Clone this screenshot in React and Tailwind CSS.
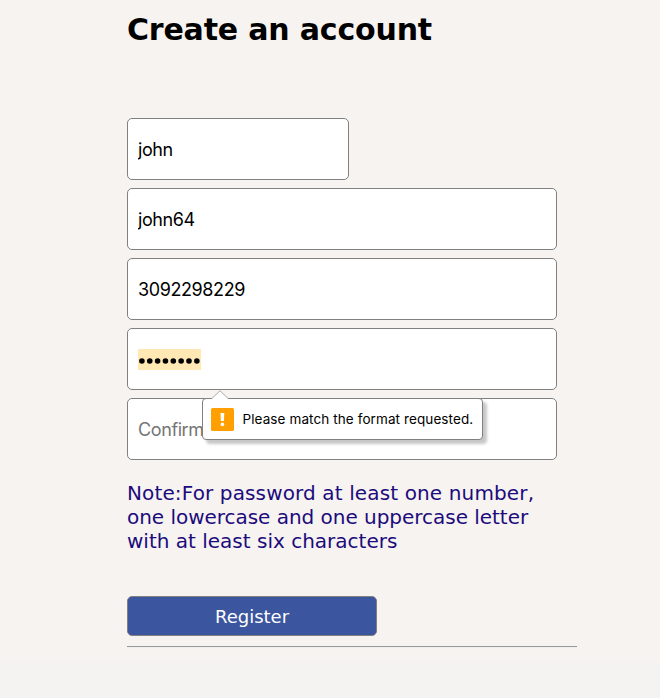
const fieldBase =
  "h-[62px] rounded-[5px] border border-[#808080] bg-white px-[10px] text-[18px] tracking-[-0.4px] font-['Inter','Liberation_Sans',sans-serif] outline-none";

function ValidationBubble() {
  return (
    <div role="alert" className="absolute left-[75px] top-0 flex h-[42px] w-[281px] items-center rounded-[4px] border border-[#808080] bg-white pl-2 shadow-[4px_4px_3px_rgba(0,0,0,0.22)]">
      <svg className="absolute left-[8px] top-[-9px]" width="18" height="11" viewBox="0 0 18 11">
        <path d="M0.5 9 L9 0.8 L17.5 9 V11 H0.5 Z" fill="#fff" />
        <path d="M0.5 8.8 L9 0.8 L17.5 8.8" fill="none" stroke="#aaa" />
      </svg>
      <svg width="23" height="23" viewBox="0 0 23 23" className="shrink-0">
        <rect width="23" height="23" rx="1.5" fill="#ffa000" />
        <path d="M9.5 5 H13.3 L12.9 13 H9.9 Z" fill="#fff" />
        <circle cx="11.4" cy="16.4" r="1.8" fill="#fff" />
      </svg>
      <span className="ml-[8.5px] whitespace-nowrap font-['Inter','Liberation_Sans',sans-serif] text-[13.5px] tracking-[0.1px] text-black">
        Please match the format requested.
      </span>
    </div>
  );
}

export default function App() {
  return (
    <div className="flex h-[698px] w-[660px] flex-col overflow-hidden bg-[#f4f3f1] font-['DejaVu_Sans',sans-serif]">
      <main className="h-[662px] bg-[#f7f3f0] pl-[127px]">
        <h1 className="h-[118px] whitespace-nowrap pt-[10px] text-[30px] font-bold leading-[40px] tracking-[-0.18px] text-black">
          Create an account
        </h1>
        <form className="flex flex-col items-start gap-2">
          <input readOnly value="john" className={fieldBase + " w-[222px]"} />
          <input readOnly value="john64" className={fieldBase + " w-[430px]"} />
          <input readOnly value="3092298229" className={fieldBase + " w-[430px]"} />
          <div className={fieldBase + " flex w-[430px] items-center"}>
            <svg width="63" height="21" viewBox="0 0 63 21" className="bg-[#ffe8b3]">
              {Array.from({ length: 8 }, (_, i) => (
                <circle key={i} cx={3.9 + i * 7.85} cy="12" r="2.8" fill="#000" />
              ))}
            </svg>
          </div>
          <div className="relative flex">
            <input readOnly placeholder="Confirm Password" className={fieldBase + " w-[430px] placeholder:text-[#757575]"} />
            <ValidationBubble />
          </div>
        </form>
        <p className="mt-[21px] whitespace-nowrap text-[20px] leading-6 text-[#1c0b7c]">
          <span className="block tracking-[0.13px]">Note:For password at least one number,</span>
          <span className="block tracking-[-0.03px]">one lowercase and one uppercase letter</span>
          <span className="block">with at least six characters</span>
        </p>
        <button className="mt-[43px] block h-10 w-[250px] rounded-[5px] border border-[#808080] bg-[#3b559f] text-[18px] text-white">
          Register
        </button>
        <hr className="mt-[10px] h-[2px] w-[450px] border-0 border-t border-[#999999] bg-[#f1efed]" />
      </main>
    </div>
  );
}
